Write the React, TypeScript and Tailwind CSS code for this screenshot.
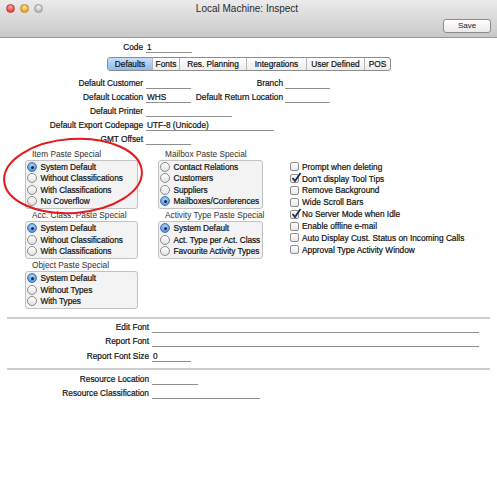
import React from "react";

const txt = "text-[8.3px] text-[#111] [-webkit-text-stroke:0.2px_#111]";

function Field({ w, value }: { w: string; value?: string }) {
  return (
    <div className={`${w} h-[11px] border-b border-[#8e8e8e] pl-[1px] leading-[10px] whitespace-nowrap`}>
      {value}
    </div>
  );
}

function Row({
  label,
  labelW,
  field,
  children,
  h = "h-[14px]",
}: {
  label: string;
  labelW: string;
  field: React.ReactNode;
  children?: React.ReactNode;
  h?: string;
}) {
  return (
    <div className={`flex items-center ${h}`}>
      <div className={`${labelW} shrink-0 text-right whitespace-nowrap`}>{label}</div>
      <div className="ml-[3px]">{field}</div>
      {children}
    </div>
  );
}

function Radio({ on }: { on?: boolean }) {
  if (on)
    return (
      <span className="w-[10px] h-[10px] shrink-0 rounded-full border border-[#4674b4] bg-[radial-gradient(circle_at_50%_35%,#b7d6f7,#5c97de_70%)] flex items-center justify-center">
        <span className="w-[3px] h-[3px] rounded-full bg-[#172640]" />
      </span>
    );
  return (
    <span className="w-[10px] h-[10px] shrink-0 rounded-full border border-[#8c8c8c] bg-[linear-gradient(#ffffff,#e2e2e2)]" />
  );
}

function Check({ on }: { on?: boolean }) {
  return (
    <span className="relative w-[9px] h-[9px] shrink-0 rounded-[2px] border border-[#8e8e8e] bg-[linear-gradient(#ffffff,#e6e6e6)]">
      {on && (
        <svg className="absolute left-[0px] top-[-3px]" width="11" height="11" viewBox="0 0 11 11">
          <path d="M1.5 6 L4 9 L9.5 1" fill="none" stroke="#1c2b55" strokeWidth="1.8" />
        </svg>
      )}
    </span>
  );
}

function Group({ title, items, sel, w }: { title: string; items: string[]; sel: number; w: string }) {
  return (
    <div className={w}>
      <div className="h-[10.5px] leading-[10.5px] pl-[7px] text-[8.3px] text-[#3a3a3a] [-webkit-text-stroke:0.05px_#3a3a3a] whitespace-nowrap">
        {title}
      </div>
      <div className="border border-[#c2c2c2] rounded-[3px] bg-[#f3f3f3] py-[1px] pl-[1px]">
        {items.map((it, i) => (
          <div key={it} className="h-[11.33px] flex items-center gap-[3.5px] whitespace-nowrap tracking-[-0.05px]">
            <Radio on={i === sel} />
            <span>{it}</span>
          </div>
        ))}
      </div>
    </div>
  );
}

const tabs = [
  { t: "Defaults", w: "w-[44px]" },
  { t: "Fonts", w: "w-[27px]" },
  { t: "Res. Planning", w: "w-[67px]" },
  { t: "Integrations", w: "w-[60px]" },
  { t: "User Defined", w: "w-[58px]" },
  { t: "POS", w: "w-[26px]" },
];

const checks = [
  { t: "Prompt when deleting", on: false },
  { t: "Don't display Tool Tips", on: true },
  { t: "Remove Background", on: false },
  { t: "Wide Scroll Bars", on: false },
  { t: "No Server Mode when Idle", on: true },
  { t: "Enable offline e-mail", on: false },
  { t: "Auto Display Cust. Status on Incoming Calls", on: false },
  { t: "Approval Type Activity Window", on: false },
];

export default function App() {
  return (
    <div className={`relative w-[497px] h-[480px] overflow-hidden bg-white font-['Liberation_Sans',Arial,sans-serif] ${txt}`}>
      {/* title bar + toolbar */}
      <div className="h-[38px] border-b border-[#9a9a9a] bg-[linear-gradient(#ebebeb,#c8c8c8)] [-webkit-text-stroke:0px]">
        <div className="flex items-center h-[17px] px-[6px]">
          <div className="flex gap-[5px]">
            <span className="w-[9px] h-[9px] rounded-full border border-[#c0433c] bg-[radial-gradient(circle_at_50%_30%,#ffb0a8,#e8463d_65%)]" />
            <span className="w-[9px] h-[9px] rounded-full border border-[#c08a1e] bg-[radial-gradient(circle_at_50%_30%,#ffe6a0,#e9a92a_65%)]" />
            <span className="w-[9px] h-[9px] rounded-full border border-[#9a9a9a] bg-[radial-gradient(circle_at_50%_30%,#f5f5f5,#bdbdbd_65%)]" />
          </div>
          <div className="flex-1 text-center text-[10px] text-[#2a2a2a] pr-[40px] leading-[17px]">Local Machine: Inspect</div>
        </div>
        <div className="flex justify-end pr-[6px] mt-[2px]">
          <button className="w-[48px] h-[14px] rounded-[3px] border border-[#8c8c8c] bg-[linear-gradient(#ffffff,#e9e9e9)] text-[8px] text-[#222] leading-[12px]">
            Save
          </button>
        </div>
      </div>

      <div className="pt-[2px]">
        <Row label="Code" labelW="w-[143px]" field={<Field w="w-[46px]" value="1" />} />

        <div className="mt-[3px] pl-[107px] flex">
          <div className="flex h-[14px] rounded-[3px] border border-[#8d8d8d] overflow-hidden bg-[linear-gradient(#ffffff,#ececec)]">
            {tabs.map((tb, i) => (
              <div
                key={tb.t}
                className={`${tb.w} flex items-center justify-center whitespace-nowrap leading-[12px] ${
                  i > 0 ? "border-l border-[#b5b5b5]" : ""
                } ${i === 0 ? "bg-[linear-gradient(#c6def8,#8ebcef)]" : ""}`}
              >
                {tb.t}
              </div>
            ))}
          </div>
        </div>

        <div className="mt-[5px]">
          <Row label="Default Customer" labelW="w-[143px]" field={<Field w="w-[45px]" />}>
            <div className="w-[92px] text-right">Branch</div>
            <div className="ml-[2px]">
              <Field w="w-[45px]" />
            </div>
          </Row>
          <Row label="Default Location" labelW="w-[143px]" field={<Field w="w-[45px]" value="WHS" />}>
            <div className="w-[92px] text-right whitespace-nowrap">Default Return Location</div>
            <div className="ml-[2px]">
              <Field w="w-[45px]" />
            </div>
          </Row>
          <Row label="Default Printer" labelW="w-[143px]" field={<Field w="w-[86px]" />} />
          <Row label="Default Export Codepage" labelW="w-[143px]" field={<Field w="w-[128px]" value="UTF-8 (Unicode)" />} />
          <Row label="GMT Offset" labelW="w-[143px]" field={<Field w="w-[45px]" />} />
        </div>

        <div className="mt-[3px] pl-[25px] flex">
          <div className="w-[113px] flex flex-col gap-[1.5px]">
            <Group
              w="w-[113px]"
              title="Item Paste Special"
              sel={0}
              items={["System Default", "Without Classifications", "With Classifications", "No Coverflow"]}
            />
            <Group
              w="w-[113px]"
              title="Acc. Class. Paste Special"
              sel={0}
              items={["System Default", "Without Classifications", "With Classifications"]}
            />
            <Group w="w-[113px]" title="Object Paste Special" sel={0} items={["System Default", "Without Types", "With Types"]} />
          </div>
          <div className="ml-[20px] w-[105px] flex flex-col gap-[1.5px]">
            <Group
              w="w-[105px]"
              title="Mailbox Paste Special"
              sel={3}
              items={["Contact Relations", "Customers", "Suppliers", "Mailboxes/Conferences"]}
            />
            <Group
              w="w-[105px]"
              title="Activity Type Paste Special"
              sel={0}
              items={["System Default", "Act. Type per Act. Class", "Favourite Activity Types"]}
            />
          </div>
          <div className="ml-[27px] pt-[12px]">
            {checks.map((c) => (
              <div key={c.t} className="h-[11.85px] flex items-center gap-[3px] whitespace-nowrap">
                <Check on={c.on} />
                <span>{c.t}</span>
              </div>
            ))}
          </div>
        </div>

        <div className="mt-[8px] mx-[7px] h-[2px] bg-[#cdcdcd]" />

        <div className="mt-[1px]">
          <Row h="h-[14.5px]" label="Edit Font" labelW="w-[149px]" field={<Field w="w-[327px]" />} />
          <Row h="h-[14.5px]" label="Report Font" labelW="w-[149px]" field={<Field w="w-[327px]" />} />
          <Row h="h-[14.5px]" label="Report Font Size" labelW="w-[149px]" field={<Field w="w-[39px]" value="0" />} />
        </div>

        <div className="mt-[5px] mx-[7px] h-[2px] bg-[#cdcdcd]" />

        <div className="mt-[2.5px]">
          <Row h="h-[13.5px]" label="Resource Location" labelW="w-[149px]" field={<Field w="w-[46px]" />} />
          <Row h="h-[13.5px]" label="Resource Classification" labelW="w-[149px]" field={<Field w="w-[108px]" />} />
        </div>
      </div>

      {/* red annotation ellipse */}
      <svg className="absolute left-0 top-0 pointer-events-none" width="497" height="480">
        <ellipse cx="73" cy="176" rx="69" ry="37" transform="rotate(-4 73 176)" fill="none" stroke="#e3191c" strokeWidth="2" />
      </svg>
    </div>
  );
}
